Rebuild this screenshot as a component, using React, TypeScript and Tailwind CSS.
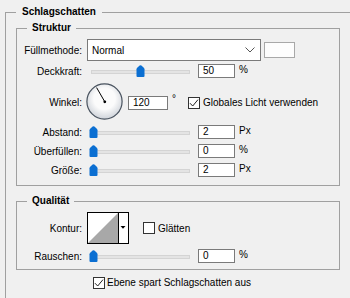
import React from 'react';

const FONT = "font-['Liberation_Sans',Arial,sans-serif]";

function Thumb({ left }: { left: number }) {
  return (
    <svg
      width="9"
      height="12"
      viewBox="0 0 9 12"
      className="absolute top-[1px]"
      style={{ left: `${left}px` }}
    >
      <path
        d="M0.5 4.2 Q0.5 3.4 1.2 2.7 L3.6 0.6 Q4.5 -0.1 5.4 0.6 L7.8 2.7 Q8.5 3.4 8.5 4.2 V11 Q8.5 12 7.5 12 H1.5 Q0.5 12 0.5 11 Z"
        fill="#0b6fd2"
      />
    </svg>
  );
}

function Slider({ value }: { value: number }) {
  return (
    <div className="relative w-[107px] h-[14px] shrink-0">
      <div className="absolute left-[4px] right-[4px] top-[6px] h-[4px] bg-[#e4e4e4] border border-[#d4d4d4]" />
      <Thumb left={2 + value * 94} />
    </div>
  );
}

function NumBox({ v, className = 'w-[37px]' }: { v: string; className?: string }) {
  return (
    <div
      className={`${className} h-[14px] shrink-0 bg-white border border-[#7a7a7a] pl-[4px] text-[10px] leading-[12px]`}
    >
      {v}
    </div>
  );
}

function Check({ checked }: { checked: boolean }) {
  return (
    <div className="w-[12px] h-[12px] shrink-0 bg-white border border-[#333333] flex items-center justify-center">
      {checked && (
        <svg width="10" height="10" viewBox="0 0 10 10">
          <path d="M1 5.2 L3.7 8 L9 1.6" fill="none" stroke="#222" strokeWidth="1" />
        </svg>
      )}
    </div>
  );
}

function Label({ children }: { children: React.ReactNode }) {
  return <div className="w-[65px] shrink-0 text-right whitespace-nowrap">{children}</div>;
}

function SliderRow({ label, value, num, unit }: { label: string; value: number; num: string; unit: string }) {
  return (
    <div className="flex items-center h-[14px] gap-[5px]">
      <Label>{label}</Label>
      <Slider value={value} />
      <div className="flex items-start gap-[4px] ml-[-1px]">
        <NumBox v={num} />
        <span className="leading-[10px] mt-[1px]">{unit}</span>
      </div>
    </div>
  );
}

function Dial() {
  return (
    <svg width="37" height="38" viewBox="0 0 37 38" className="ml-[-1px]">
      <defs>
        <radialGradient id="dialg" cx="50%" cy="42%" r="55%">
          <stop offset="55%" stopColor="#fbfbfb" />
          <stop offset="100%" stopColor="#d3d7dd" />
        </radialGradient>
      </defs>
      <circle cx="18.5" cy="18.5" r="17.6" fill="url(#dialg)" stroke="#48525e" strokeWidth="1.2" />
      <line x1="18.8" y1="18.8" x2="10.6" y2="4.6" stroke="#000" strokeWidth="1" />
      <circle cx="18.8" cy="18.8" r="1.4" fill="#000" />
    </svg>
  );
}

function Contour() {
  return (
    <svg width="42" height="32" viewBox="0 0 42 32">
      <rect x="0.5" y="0.5" width="41" height="31" fill="#fff" stroke="#000" />
      <polygon points="1,31 31,1 31,31" fill="#a8a8a8" />
      <line x1="31.5" y1="0" x2="31.5" y2="32" stroke="#000" />
      <polygon points="33.5,14 38.5,14 36,16.8" fill="#000" />
    </svg>
  );
}

export default function App() {
  return (
    <div className={`w-[350px] h-[298px] overflow-hidden bg-[#f0f0f0] text-black text-[10px] ${FONT}`}>
      <fieldset className="ml-[5px] mt-[5px] w-[370px] border border-[#a0a0a0] pl-[10px] pb-[20px]">
        <legend className="px-[6px] font-bold leading-[14px]">Schlagschatten</legend>

        {/* Struktur */}
        <fieldset className="mt-[2px] w-[324px] border border-[#a0a0a0] pb-[8px]">
          <legend className="ml-[10px] px-[5px] font-bold leading-[14px]">Struktur</legend>

          <div className="flex items-center h-[22px] gap-[5px] mt-[4px]">
            <Label>Füllmethode:</Label>
            <div className="w-[174px] h-[22px] bg-white border border-[#7a7a7a] flex items-center justify-between pl-[4px] pr-[5px]">
              <span>Normal</span>
              <svg width="10" height="6" viewBox="0 0 10 6">
                <path d="M0.5 0.5 L5 5 L9.5 0.5" fill="none" stroke="#555" strokeWidth="1" />
              </svg>
            </div>
            <div className="ml-[-2px] w-[31px] h-[16px] bg-[#fdfdfd] border border-[#a8a8a8]" />
          </div>

          <div className="mt-[3px]">
            <SliderRow label="Deckkraft:" value={0.5} num="50" unit="%" />
          </div>

          <div className="flex items-center h-[38px] gap-[5px] mt-[5px]">
            <Label>Winkel:</Label>
            <Dial />
            <div className="flex items-start gap-[4px] mt-[1px]">
              <NumBox v="120" className="w-[40px]" />
              <span className="leading-[8px] mt-[-1px]">°</span>
            </div>
            <div className="flex items-center gap-[3px] ml-[7px] mt-[1px]">
              <Check checked />
              <span>Globales Licht verwenden</span>
            </div>
          </div>

          <div className="flex flex-col gap-[5px] mt-[4px]">
            <SliderRow label="Abstand:" value={0} num="2" unit="Px" />
            <SliderRow label="Überfüllen:" value={0} num="0" unit="%" />
            <SliderRow label="Größe:" value={0} num="2" unit="Px" />
          </div>
        </fieldset>

        {/* Qualität */}
        <fieldset className="mt-[8px] w-[324px] border border-[#a0a0a0] pb-[6px]">
          <legend className="ml-[10px] px-[5px] font-bold leading-[14px]">Qualität</legend>

          <div className="flex items-center h-[32px] gap-[5px] mt-[4px]">
            <Label>Kontur:</Label>
            <Contour />
            <div className="flex items-center gap-[3px] ml-[9px]">
              <Check checked={false} />
              <span>Glätten</span>
            </div>
          </div>

          <div className="mt-[5px]">
            <SliderRow label="Rauschen:" value={0} num="0" unit="%" />
          </div>
        </fieldset>

        <div className="flex items-center gap-[2px] ml-[77px] mt-[5px]">
          <Check checked />
          <span>Ebene spart Schlagschatten aus</span>
        </div>
      </fieldset>
    </div>
  );
}
